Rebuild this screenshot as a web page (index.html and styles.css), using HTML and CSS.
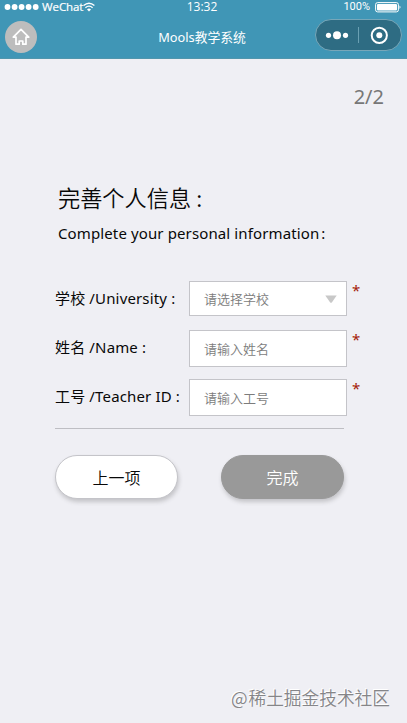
FILE: index.html
```html
<!DOCTYPE html>
<html lang="zh-CN">
<head>
<meta charset="utf-8">
<title>Mools教学系统</title>
<link rel="stylesheet" href="styles.css">
</head>
<body>
<header class="header">
  <div class="status">
    <div class="carrier">
      <svg class="signal" width="35" height="8" viewBox="0 0 35 8" fill="#fff"><circle cx="3.5" cy="4" r="2.9"/><circle cx="10.6" cy="4" r="2.9"/><circle cx="17.6" cy="4" r="2.9"/><circle cx="24.6" cy="4" r="2.9"/><circle cx="31.7" cy="4" r="2.9"/></svg>
      <span class="network">WeChat</span>
      <svg width="12" height="10" viewBox="0 0 12 10" fill="none" stroke="#fff" stroke-width="1.3"><path d="M.6 3.6Q6-1.2 11.4 3.6M2.4 5.7Q6 2.5 9.6 5.7"/><path d="M4 7.4Q6 5.8 8 7.4L6 9.4Z" fill="#fff" stroke="none"/></svg>
    </div>
    <time class="clock">13:32</time>
    <div class="power">
      <span class="percent">100%</span>
      <svg width="27" height="11" viewBox="0 0 27 11"><rect x=".6" y=".6" width="22.8" height="9.3" rx="2" fill="none" stroke="#fff"/><rect x="2" y="2" width="20" height="6.5" rx="1" fill="#fff"/><path d="M24.5 3.5Q26.5 5.2 24.5 7Z" fill="#fff"/></svg>
    </div>
  </div>
  <nav class="nav">
    <a class="home"><svg width="32" height="32" viewBox="0 0 32 32" fill="none" stroke="#fff" stroke-width="1.7" stroke-linejoin="round"><path d="M16 8.3L8.3 16.2H11V23.2H14.2V20H17.8V23.2H21V16.2H23.7Z"/></svg></a>
    <h1 class="app">Mools教学系统</h1>
    <div class="capsule"><svg width="86" height="32" viewBox="0 0 86 32"><g fill="#fff"><circle cx="12.5" cy="16.3" r="2.6"/><circle cx="21" cy="16.3" r="4"/><circle cx="29.5" cy="16.3" r="2.6"/><circle cx="63.3" cy="16.3" r="3"/></g><path d="M42.5 8V24" stroke="#6aa0b3"/><circle cx="63.3" cy="16.3" r="7.6" fill="none" stroke="#fff" stroke-width="2"/></svg></div>
  </nav>
</header>
<main class="page">
  <div class="step">2/2</div>
  <h2 class="title">完善个人信息<span class="title-colon">:</span></h2>
  <p class="subtitle">Complete your personal information<span class="sub-colon">:</span></p>
  <form class="form">
    <div class="row"><label class="label university">学校 /University :</label><div class="field select">请选择学校<svg width="12" height="8" viewBox="0 0 12 8"><path d="M.3.5H11.7L7 7.2Q6 8.2 5 7.2Z" fill="#c8c8c8"/></svg></div><span class="required">*</span></div>
    <div class="row"><label class="label name">姓名 /Name :</label><div class="field">请输入姓名</div><span class="required">*</span></div>
    <div class="row"><label class="label teacher">工号 /Teacher ID :</label><div class="field">请输入工号</div><span class="required">*</span></div>
  </form>
  <div class="actions"><button class="button previous">上一项</button><button class="button done">完成</button></div>
</main>
<footer class="credit"><span class="at">@</span>稀土掘金技术社区</footer>
</body>
</html>
```
FILE: styles.css
```css
* { box-sizing: border-box; }
body {
  margin: 0;
  height: 723px;
  display: flex;
  flex-direction: column;
  overflow: hidden;
  background: #efeff4;
  color: #080808;
  font-family: "Noto Sans", "Noto Sans CJK SC", sans-serif;
}
h1, h2, p { margin: 0; font-weight: 400; }
svg { display: block; flex: none; }
.header { height: 59px; background: #4096b6; color: #fff; border-bottom: 1px solid #5196ad; }
.status { height: 14px; display: grid; grid-template-columns: 1fr 40px 1fr; align-items: center; line-height: 14px; padding: 0 5px 0 4px; }
.carrier { display: flex; align-items: center; }
.network { font: 500 11.5px/14px "Open Sans", sans-serif; letter-spacing: -.1px; margin-left: 3px; margin-top: -1px; -webkit-text-stroke: .2px #fff; }
.clock { font: 12px/14px "Open Sans", sans-serif; margin-left: -2px; margin-top: -1px; text-align: center; }
.power { display: flex; align-items: center; justify-content: flex-end; gap: 5px; }
.percent { font: 11px/14px Roboto, sans-serif; }
.nav { display: grid; grid-template-columns: 1fr 100px 1fr; align-items: center; height: 42px; padding: 0 5px; }
.home { width: 32px; height: 32px; border-radius: 50%; background: #bdbdbd; margin-top: 4px; }
.app { font-size: 12.8px; line-height: 20px; margin: 4px 0 0 -3px; text-align: center; white-space: nowrap; }
.capsule { width: 87px; height: 32px; border: 1px solid #77a7b9; border-radius: 16px; background: #2e6c83; justify-self: end; overflow: hidden; }
.capsule svg { margin-top: -1px; }
.page { flex: 1; padding-left: 55px; }
.step { margin: 25px 23px 0 0; text-align: right; font-size: 20px; line-height: 26px; color: #777; }
.title { margin: 72px 0 0 3px; font-size: 22.2px; line-height: 30px; font-family: "Noto Sans CJK SC", sans-serif; font-weight: 350; }
.title-colon { margin-left: 5px; }
.subtitle { margin: 11px 0 0 3px; font-size: 15px; line-height: 20px; letter-spacing: .12px; white-space: nowrap; }
.sub-colon { margin-left: 2px; }
.form { width: 289px; margin-top: 38px; height: 148px; border-bottom: 1px solid #bebec3; display: flex; flex-direction: column; gap: 12px; }
.row { display: flex; height: 37px; width: 310px; align-items: center; flex: none; }
.label { width: 134px; font-size: 15px; line-height: 20px; letter-spacing: .15px; margin-bottom: 3px; white-space: nowrap; }
.field { width: 158px; height: 37px; border: 1px solid #c4c4c9; background: #fff; padding: 0 9px 0 14px; display: flex; align-items: center; justify-content: space-between; font: 350 13px/20px "Noto Sans CJK SC", sans-serif; color: #7c7c7c; }
.select { height: 35px; margin-bottom: 2px; }
.required { align-self: flex-start; margin-left: 5px; font-size: 15px; line-height: 20px; margin-top: -1px; color: #a41b08; }
.actions { display: flex; gap: 43px; margin-top: 26px; }
.button { width: 123px; height: 44px; border: 1px solid #c4c4c9; border-radius: 22px; padding: 0; font: 350 16px/22px "Noto Sans CJK SC", sans-serif; color: #080808; background: #fff; box-shadow: 1px 3px 4px #c4c4c8; }
.done { background: #999; border-color: #999; color: #fff; }
.credit { padding: 0 17px 14px 0; text-align: right; font: 350 17.7px/24px "Noto Sans CJK SC", sans-serif; color: #858588; text-shadow: -1px -1px #fff; }
.at { margin-right: 1px; }
```
